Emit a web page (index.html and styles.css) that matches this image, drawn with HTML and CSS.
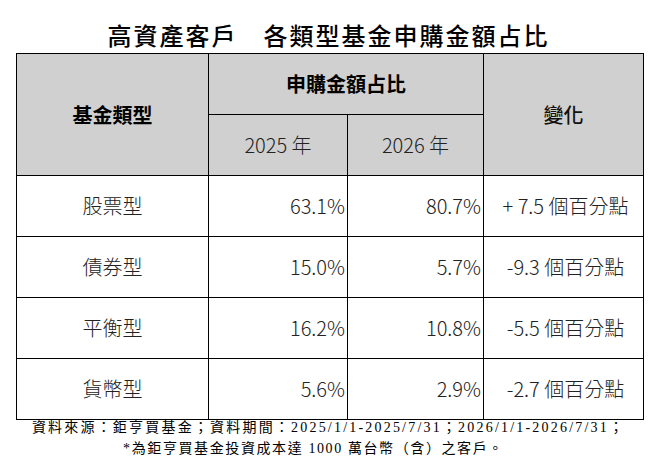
FILE: index.html
```html
<!DOCTYPE html>
<html lang="zh-Hant">
<head>
<meta charset="utf-8">
<title>高資產客戶 各類型基金申購金額占比</title>
<link rel="stylesheet" href="styles.css">
</head>
<body>
<div class="page">
  <h1 class="title">高資產客戶　各類型基金申購金額占比</h1>
  <table class="fund-table">
    <colgroup>
      <col class="c-type">
      <col class="c-y1">
      <col class="c-y2">
      <col class="c-chg">
    </colgroup>
    <thead>
      <tr>
        <th rowspan="2" class="th-main">基金類型</th>
        <th colspan="2" class="th-main">申購金額占比</th>
        <th rowspan="2" class="th-chg">變化</th>
      </tr>
      <tr>
        <th class="th-year">2025 年</th>
        <th class="th-year">2026 年</th>
      </tr>
    </thead>
    <tbody>
      <tr>
        <td class="name">股票型</td>
        <td class="num">63.1%</td>
        <td class="num">80.7%</td>
        <td class="chg">+ 7.5 個百分點</td>
      </tr>
      <tr>
        <td class="name">債券型</td>
        <td class="num">15.0%</td>
        <td class="num">5.7%</td>
        <td class="chg">-9.3 個百分點</td>
      </tr>
      <tr>
        <td class="name">平衡型</td>
        <td class="num">16.2%</td>
        <td class="num">10.8%</td>
        <td class="chg">-5.5 個百分點</td>
      </tr>
      <tr>
        <td class="name">貨幣型</td>
        <td class="num">5.6%</td>
        <td class="num">2.9%</td>
        <td class="chg">-2.7 個百分點</td>
      </tr>
    </tbody>
  </table>
  <div class="notes">
    <p class="note note-1">資料來源：鉅亨買基金；資料期間：2025/1/1-2025/7/31；2026/1/1-2026/7/31；</p>
    <p class="note note-2">*為鉅亨買基金投資成本達 1000 萬台幣（含）之客戶。</p>
  </div>
</div>
</body>
</html>
```

FILE: styles.css
```css
html, body {
  margin: 0;
  padding: 0;
  background: #ffffff;
}

.page {
  width: 657px;
  height: 468px;
  overflow: hidden;
  font-family: "Noto Sans CJK TC", "Noto Sans", sans-serif;
  color: #000;
}

.title {
  margin: 0;
  padding-top: 22px;
  height: 31px;
  line-height: 26px;
  font-size: 24px;
  font-weight: 500;
  letter-spacing: 2px;
  text-align: center;
}

.fund-table {
  margin-left: 16px;
  width: 627px;
  table-layout: fixed;
  border-collapse: collapse;
  font-size: 20px;
}

.c-type { width: 192px; }
.c-y1 { width: 139px; }
.c-y2 { width: 136px; }
.c-chg { width: 160px; }

.fund-table th,
.fund-table td {
  border: 1px solid #000;
  height: 60px;
  padding: 0;
  vertical-align: middle;
  line-height: 24px;
}

.fund-table th {
  background: #d0d0d0;
}

.th-main {
  font-weight: 700;
  color: #000;
}

.th-chg {
  font-weight: 500;
  color: #111;
}

.th-year {
  font-weight: 300;
  color: #222;
}

.fund-table td {
  font-weight: 300;
  color: #222;
}

.name {
  text-align: center;
}

.num {
  text-align: right;
  padding-right: 2px !important;
}

.chg {
  text-align: center;
  padding-left: 4px !important;
}

.notes {
  margin-top: -3px;
  font-family: "Liberation Serif", "Noto Sans CJK TC", serif;
  font-size: 14px;
  line-height: 21px;
  color: #000;
  text-align: center;
}

.note {
  margin: 0;
}

.note-1 {
  letter-spacing: 2.2px;
}

.note-2 {
  letter-spacing: 1.6px;
  padding-right: 30px;
}
```
